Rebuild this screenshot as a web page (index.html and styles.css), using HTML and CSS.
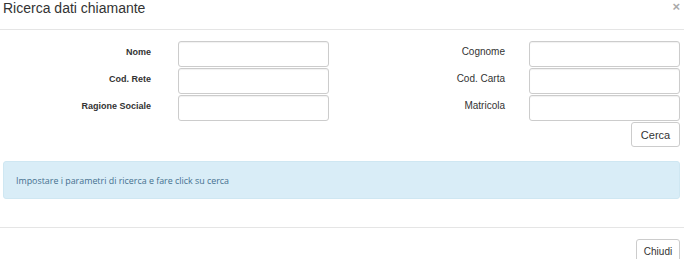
FILE: index.html
```html
<!DOCTYPE html>
<html>
<head>
<meta charset="utf-8">
<link rel="stylesheet" href="styles.css">
</head>
<body>
<div class="modal">
  <div class="modal-header">
    <h4 class="title">Ricerca dati chiamante</h4>
    <span class="close">&times;</span>
  </div>
  <div class="modal-body">
    <div class="form-grid">
      <label class="lbl lbl-left">Nome</label>
      <input class="field" type="text">
      <label class="lbl lbl-right">Cognome</label>
      <input class="field" type="text">
      <label class="lbl lbl-left">Cod. Rete</label>
      <input class="field" type="text">
      <label class="lbl lbl-right">Cod. Carta</label>
      <input class="field" type="text">
      <label class="lbl lbl-left">Ragione Sociale</label>
      <input class="field" type="text">
      <label class="lbl lbl-right">Matricola</label>
      <input class="field" type="text">
    </div>
    <div class="actions">
      <button class="btn btn-cerca">Cerca</button>
    </div>
    <div class="alert">Impostare i parametri di ricerca e fare click su cerca</div>
  </div>
  <div class="modal-footer">
    <button class="btn btn-chiudi">Chiudi</button>
  </div>
</div>
</body>
</html>
```

FILE: styles.css
```css
* { box-sizing: border-box; }
html, body { margin: 0; padding: 0; background: #fff; }
body {
  font-family: "Liberation Sans", Arial, sans-serif;
  color: #333;
  width: 684px;
  height: 259px;
  overflow: hidden;
}
.modal-header {
  position: relative;
  height: 30px;
  border-bottom: 1px solid #e5e5e5;
  padding: 0 0 0 3px;
}
.title {
  margin: 0;
  font-weight: normal;
  font-size: 14px;
  line-height: 17px;
  color: #333;
}
.close {
  position: absolute;
  right: 4px;
  top: 0;
  font-size: 13px;
  font-weight: bold;
  color: #aaa;
  line-height: 14px;
}
.modal-body {
  padding: 11px 4px 0 3px;
}
.form-grid {
  display: grid;
  grid-template-columns: 151px 151px 152px 151px;
  column-gap: 24px;
  row-gap: 1px;
  grid-auto-rows: 26px;
}
.lbl {
  text-align: right;
  font-size: 10px;
  padding-top: 5px;
  line-height: 12px;
}
.lbl-left { font-weight: bold; font-size: 9px; padding-right: 3px; }
.lbl-right { font-weight: normal; }
.field {
  height: 26px;
  width: 151px;
  border: 1px solid #ccc;
  border-radius: 3px;
  box-shadow: inset 0 1px 1px rgba(0,0,0,0.06);
  margin: 0;
  padding: 0 6px;
  background: #fff;
}
.actions {
  display: flex;
  justify-content: flex-end;
  padding-top: 1px;
}
.btn {
  font-family: "Liberation Sans", Arial, sans-serif;
  background: #fff;
  border: 1px solid #ccc;
  border-radius: 3px;
  color: #333;
  padding: 0;
  margin: 0;
}
.btn-cerca {
  width: 49px;
  height: 25px;
  font-size: 11px;
}
.alert {
  margin-top: 14px;
  height: 38px;
  background: #d9edf7;
  border: 1px solid #cfe7f2;
  border-radius: 3px;
  color: #45708f;
  font-family: "Open Sans", sans-serif;
  font-size: 8.9px;
  padding: 13px 0 0 12px;
  line-height: 12px;
}
.modal-footer {
  margin-top: 28px;
  border-top: 1px solid #e5e5e5;
  display: flex;
  justify-content: flex-end;
  padding: 11px 4px 0 0;
}
.btn-chiudi {
  width: 44px;
  height: 25px;
  font-size: 10px;
}
```
